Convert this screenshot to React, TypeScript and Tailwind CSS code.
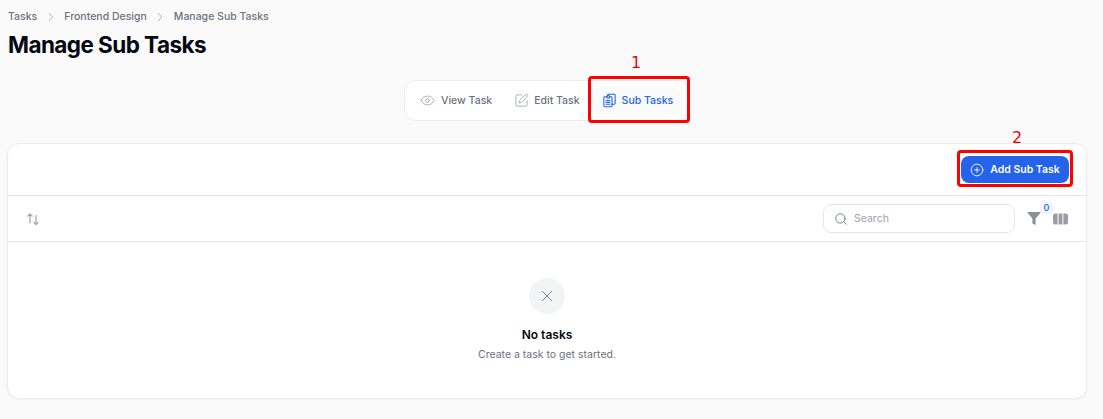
import React from 'react';
import { ChevronRight, Eye, SquarePen, CirclePlus, Search, X } from 'lucide-react';

const SubTasksIcon = () => (
  <svg width="15" height="15" viewBox="0 0 24 24" fill="none" stroke="currentColor" strokeWidth="1.7" strokeLinejoin="round" strokeLinecap="round">
    <path d="M8 6H4.500A1.500 1.500 0 0 0 3 7.500v13A1.500 1.500 0 0 0 4.500 22h10a1.500 1.500 0 0 0 1.500-1.500v-13A1.500 1.500 0 0 0 14.500 6H12" />
    <path d="M8 4.500h4V8H8z" />
    <path d="M16 18h3.500a1.500 1.500 0 0 0 1.500-1.500v-13A1.500 1.500 0 0 0 19.500 2H10.500A1.500 1.500 0 0 0 9 3.500v1" />
    <path d="M6.500 12h6M6.500 15h6M6.500 18h6" />
  </svg>
);

const SortIcon = () => (
  <svg width="14" height="14" viewBox="0 0 14 14" fill="none" stroke="currentColor" strokeWidth="1.2" strokeLinecap="round" strokeLinejoin="round">
    <path d="M4 11V2M1.800 4.200 4 2l2.200 2.200" />
    <path d="M10 3.500v9M7.800 10.300 10 12.500l2.200-2.200" />
  </svg>
);

const FilterIcon = () => (
  <svg width="14" height="15" viewBox="0 0 14 15" fill="currentColor" className="block">
    <path d="M.8 1h12.400c.4 0 .6.500.3.800L8.600 7.400V14l-3.200-1.400V7.400L.5 1.800C.2 1.500.4 1 .8 1z" />
  </svg>
);

const ColumnsIcon = () => (
  <svg width="15" height="12" viewBox="0 0 15 12" fill="currentColor" className="block">
    <path d="M2.500 .5h2.100v11H2.500a2.500 2.500 0 0 1-2.500-2.500V3A2.500 2.500 0 0 1 2.500 .5z" />
    <path d="M5.600 .5h3.800v11H5.600z" />
    <path d="M10.400 .5h2.100A2.500 2.500 0 0 1 15 3v6a2.500 2.500 0 0 1-2.500 2.500h-2.100z" />
  </svg>
);

export default function App() {
  return (
    <div className="relative h-[419px] w-[1103px] overflow-hidden bg-[#fafafa] px-2 text-[#030712] [font-family:Inter,sans-serif]">
      {/* Breadcrumbs */}
      <nav className="flex h-[33px] items-center whitespace-nowrap text-[10.5px] font-medium text-[#6b7280]">
        <span>Tasks</span>
        <ChevronRight size={14} strokeWidth={1.5} className="mx-[6.5px] text-[#9ca3af]" />
        <span>Frontend Design</span>
        <ChevronRight size={14} strokeWidth={1.5} className="mx-[6.5px] text-[#9ca3af]" />
        <span>Manage Sub Tasks</span>
      </nav>
      <h1 className="text-[22.5px] font-bold leading-[24px] tracking-[-0.025em] text-[#030712]">Manage Sub Tasks</h1>

      {/* Tabs */}
      <div className="mt-[23px] flex justify-center pr-[10px]">
        <div className="flex h-[41px] w-[285px] items-center whitespace-nowrap rounded-xl border border-[#ececee] bg-white px-[7px]">
          <button className="flex h-[28px] items-center gap-[6px] rounded-lg px-2 text-[10.5px] font-medium text-[#6b7280]">
            <Eye size={15} strokeWidth={1.4} className="text-[#9ca3af]" />
            View Task
          </button>
          <button className="ml-[6px] flex h-[28px] items-center gap-[5px] rounded-lg px-2 text-[10.5px] font-medium text-[#6b7280]">
            <SquarePen size={15} strokeWidth={1.4} className="text-[#9ca3af]" />
            Edit Task
          </button>
          <button className="ml-1 flex h-[28px] w-[91px] items-center gap-[5px] rounded-lg bg-[#f9fafb] pl-[10px] text-[10.5px] font-medium text-[#2563eb]">
            <SubTasksIcon />
            Sub Tasks
          </button>
        </div>
      </div>

      {/* Card */}
      <div className="ml-[-1px] mt-[22px] h-[256px] w-[1080px] rounded-xl border border-[#ececee] bg-white shadow-xs">
        <div className="flex h-[52px] items-center justify-end border-b border-[#e5e7eb] pr-[17px]">
          <button className="flex h-[27px] w-[108px] items-center justify-center gap-[6px] rounded-lg bg-[#2563eb] text-[10.5px] font-semibold text-white">
            <CirclePlus size={14} strokeWidth={1.5} />
            Add Sub Task
          </button>
        </div>
        <div className="flex h-[46px] items-center border-b border-[#e5e7eb] pl-[18px] pr-[19px]">
          <span className="text-[#9ca3af]"><SortIcon /></span>
          <div className="ml-auto flex h-[29px] w-[192px] items-center gap-[6px] rounded-lg border border-[#e5e7eb] bg-white pl-[10px]">
            <Search size={14} strokeWidth={1.5} className="text-[#6b7280]" />
            <span className="text-[10.5px] text-[#9ca3af]">Search</span>
          </div>
          <div className="relative ml-[12px] text-[#8b8f97]">
            <FilterIcon />
            <span className="absolute -top-[9px] left-[13px] flex h-[12px] w-[13px] items-center justify-center rounded bg-[#eff6ff] text-[9px] font-medium text-[#2563eb]">0</span>
          </div>
          <span className="ml-[12px] mr-[-1px] text-[#9a9da3]"><ColumnsIcon /></span>
        </div>
        <div className="flex flex-col items-center pt-[36px]">
          <div className="flex h-[36px] w-[36px] items-center justify-center rounded-full bg-[#f3f4f6]">
            <X size={18} strokeWidth={1.2} className="text-[#6b7280]" />
          </div>
          <p className="mt-[13px] text-[12px] font-semibold leading-[16px] text-[#030712]">No tasks</p>
          <p className="mt-[4px] text-[10.5px] leading-[16px] text-[#6b7280]">Create a task to get started.</p>
        </div>
      </div>

      {/* Annotations */}
      <div className="absolute left-[588px] top-[76px] h-[47px] w-[102px] rounded-sm border-[3px] border-[#fe0000]" />
      <span className="absolute left-[631px] top-[53px] text-[16px] leading-[20px] text-[#f00000] [font-family:'DejaVu_Sans',sans-serif]">1</span>
      <div className="absolute left-[957px] top-[150px] h-[37px] w-[116px] rounded-sm border-[3px] border-[#fe0000]" />
      <span className="absolute left-[1012px] top-[128px] text-[16px] leading-[20px] text-[#f00000] [font-family:'DejaVu_Sans',sans-serif]">2</span>
    </div>
  );
}
